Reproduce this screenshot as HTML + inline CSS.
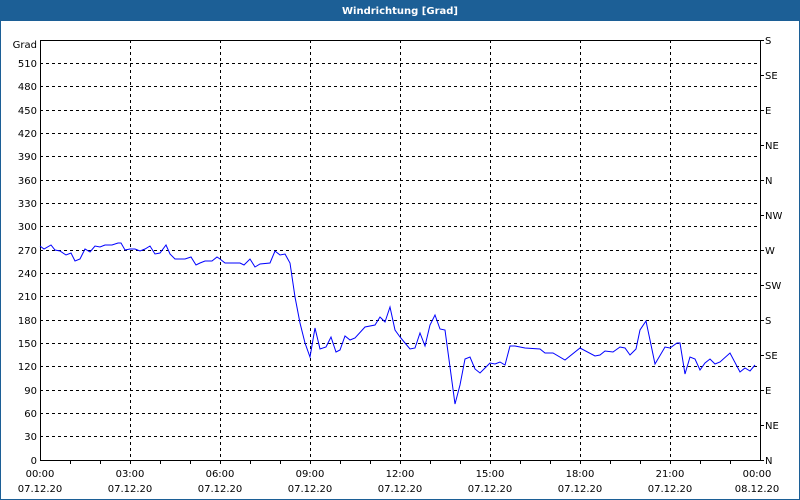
<!DOCTYPE html>
<html><head><style>
html,body{margin:0;padding:0;width:800px;height:500px;overflow:hidden;background:#fff}
svg{display:block}
text{font-family:"DejaVu Sans","Liberation Sans",sans-serif;font-size:10px;fill:#000}
</style></head><body>
<svg width="800" height="500" viewBox="0 0 800 500" xmlns="http://www.w3.org/2000/svg">
<rect x="0" y="0" width="800" height="500" fill="#1c5f96"/>
<rect x="1" y="21" width="798" height="478" fill="#fff"/>
<text x="400" y="14" text-anchor="middle" style="fill:#fff;font-weight:bold;font-size:10px">Windrichtung [Grad]</text>
<g id="grid" stroke="#000" stroke-width="1" stroke-dasharray="3,3" shape-rendering="crispEdges">
<line x1="40" x2="760" y1="436.5" y2="436.5"/><line x1="40" x2="760" y1="413.5" y2="413.5"/><line x1="40" x2="760" y1="390.5" y2="390.5"/><line x1="40" x2="760" y1="366.5" y2="366.5"/><line x1="40" x2="760" y1="343.5" y2="343.5"/><line x1="40" x2="760" y1="320.5" y2="320.5"/><line x1="40" x2="760" y1="296.5" y2="296.5"/><line x1="40" x2="760" y1="273.5" y2="273.5"/><line x1="40" x2="760" y1="250.5" y2="250.5"/><line x1="40" x2="760" y1="226.5" y2="226.5"/><line x1="40" x2="760" y1="203.5" y2="203.5"/><line x1="40" x2="760" y1="180.5" y2="180.5"/><line x1="40" x2="760" y1="156.5" y2="156.5"/><line x1="40" x2="760" y1="133.5" y2="133.5"/><line x1="40" x2="760" y1="110.5" y2="110.5"/><line x1="40" x2="760" y1="86.5" y2="86.5"/><line x1="40" x2="760" y1="63.5" y2="63.5"/>
<line y1="40" y2="460" x1="130.5" x2="130.5"/><line y1="40" y2="460" x1="220.5" x2="220.5"/><line y1="40" y2="460" x1="310.5" x2="310.5"/><line y1="40" y2="460" x1="400.5" x2="400.5"/><line y1="40" y2="460" x1="490.5" x2="490.5"/><line y1="40" y2="460" x1="580.5" x2="580.5"/><line y1="40" y2="460" x1="670.5" x2="670.5"/>
</g>
<rect x="40.5" y="40.5" width="720" height="420" fill="none" stroke="#000" shape-rendering="crispEdges"/>
<g stroke="#000" shape-rendering="crispEdges">
<line x1="70.5" x2="70.5" y1="460" y2="464"/><line x1="100.5" x2="100.5" y1="460" y2="464"/><line x1="130.5" x2="130.5" y1="460" y2="464"/><line x1="160.5" x2="160.5" y1="460" y2="464"/><line x1="190.5" x2="190.5" y1="460" y2="464"/><line x1="220.5" x2="220.5" y1="460" y2="464"/><line x1="250.5" x2="250.5" y1="460" y2="464"/><line x1="280.5" x2="280.5" y1="460" y2="464"/><line x1="310.5" x2="310.5" y1="460" y2="464"/><line x1="340.5" x2="340.5" y1="460" y2="464"/><line x1="370.5" x2="370.5" y1="460" y2="464"/><line x1="400.5" x2="400.5" y1="460" y2="464"/><line x1="430.5" x2="430.5" y1="460" y2="464"/><line x1="460.5" x2="460.5" y1="460" y2="464"/><line x1="490.5" x2="490.5" y1="460" y2="464"/><line x1="520.5" x2="520.5" y1="460" y2="464"/><line x1="550.5" x2="550.5" y1="460" y2="464"/><line x1="580.5" x2="580.5" y1="460" y2="464"/><line x1="610.5" x2="610.5" y1="460" y2="464"/><line x1="640.5" x2="640.5" y1="460" y2="464"/><line x1="670.5" x2="670.5" y1="460" y2="464"/><line x1="700.5" x2="700.5" y1="460" y2="464"/><line x1="730.5" x2="730.5" y1="460" y2="464"/>
<line x1="760" x2="764" y1="40.5" y2="40.5"/><line x1="760" x2="764" y1="75.5" y2="75.5"/><line x1="760" x2="764" y1="110.5" y2="110.5"/><line x1="760" x2="764" y1="145.5" y2="145.5"/><line x1="760" x2="764" y1="180.5" y2="180.5"/><line x1="760" x2="764" y1="215.5" y2="215.5"/><line x1="760" x2="764" y1="250.5" y2="250.5"/><line x1="760" x2="764" y1="285.5" y2="285.5"/><line x1="760" x2="764" y1="320.5" y2="320.5"/><line x1="760" x2="764" y1="355.5" y2="355.5"/><line x1="760" x2="764" y1="390.5" y2="390.5"/><line x1="760" x2="764" y1="425.5" y2="425.5"/><line x1="760" x2="764" y1="460.5" y2="460.5"/>
</g>
<g text-anchor="end">
<text x="37" y="48">Grad</text><text x="37" y="67">510</text><text x="37" y="90">480</text><text x="37" y="114">450</text><text x="37" y="137">420</text><text x="37" y="160">390</text><text x="37" y="184">360</text><text x="37" y="207">330</text><text x="37" y="230">300</text><text x="37" y="254">270</text><text x="37" y="277">240</text><text x="37" y="300">210</text><text x="37" y="324">180</text><text x="37" y="347">150</text><text x="37" y="370">120</text><text x="37" y="394">90</text><text x="37" y="417">60</text><text x="37" y="440">30</text><text x="37" y="464">0</text>
</g>
<g>
<text x="765" y="44">S</text><text x="765" y="79">SE</text><text x="765" y="114">E</text><text x="765" y="149">NE</text><text x="765" y="184">N</text><text x="765" y="219">NW</text><text x="765" y="254">W</text><text x="765" y="289">SW</text><text x="765" y="324">S</text><text x="765" y="359">SE</text><text x="765" y="394">E</text><text x="765" y="429">NE</text><text x="765" y="464">N</text>
</g>
<g text-anchor="middle">
<text x="40" y="477">00:00</text><text x="130" y="477">03:00</text><text x="220" y="477">06:00</text><text x="310" y="477">09:00</text><text x="400" y="477">12:00</text><text x="490" y="477">15:00</text><text x="580" y="477">18:00</text><text x="670" y="477">21:00</text><text x="757" y="477">00:00</text>
<text x="40" y="492">07.12.20</text><text x="130" y="492">07.12.20</text><text x="220" y="492">07.12.20</text><text x="310" y="492">07.12.20</text><text x="400" y="492">07.12.20</text><text x="490" y="492">07.12.20</text><text x="580" y="492">07.12.20</text><text x="670" y="492">07.12.20</text><text x="757" y="492">08.12.20</text>
</g>
<polyline fill="none" stroke="#0000ff" stroke-width="1" points="40,246 44,249 51,245 55,250 60,251 66,255 71,253 75,261 80,259 85,249 90,252 95,246 100,247 105,245 112,245 118,243 121,243 125,250 130,249 135,249 140,251 145,249 150,246 155,254 160,253 166,245 170,254 175,259 185,259 191,257 196,265 200,263 205,261 212,261 217,257 220,259 225,263 233,263 240,263 244,265 250,259 255,267 260,264 270,263 275,251 280,255 285,254 290,263 295,297 300,323 305,343 310,357 315,328 320,349 326,347 331,337 336,352 340,350 345,336 350,340 355,338 365,327 375,325 380,317 385,322 390,307 395,330 400,337 405,343 410,349 415,348 420,333 425,346 430,325 435,315 440,329 445,330 450,367 455,404 460,385 465,359 470,357 475,369 480,373 485,368 490,363 495,364 500,362 505,365 510,346 515,346 520,347 525,348 540,349 545,353 553,353 565,360 580,348 595,356 600,355 605,351 613,352 620,347 625,348 630,355 636,349 640,330 646,321 650,340 655,364 665,347 670,348 677,343 680,343 685,374 690,357 695,359 700,370 705,363 710,359 715,364 720,362 730,353 740,372 745,368 750,371 755,365"/>
</svg>
</body></html>
